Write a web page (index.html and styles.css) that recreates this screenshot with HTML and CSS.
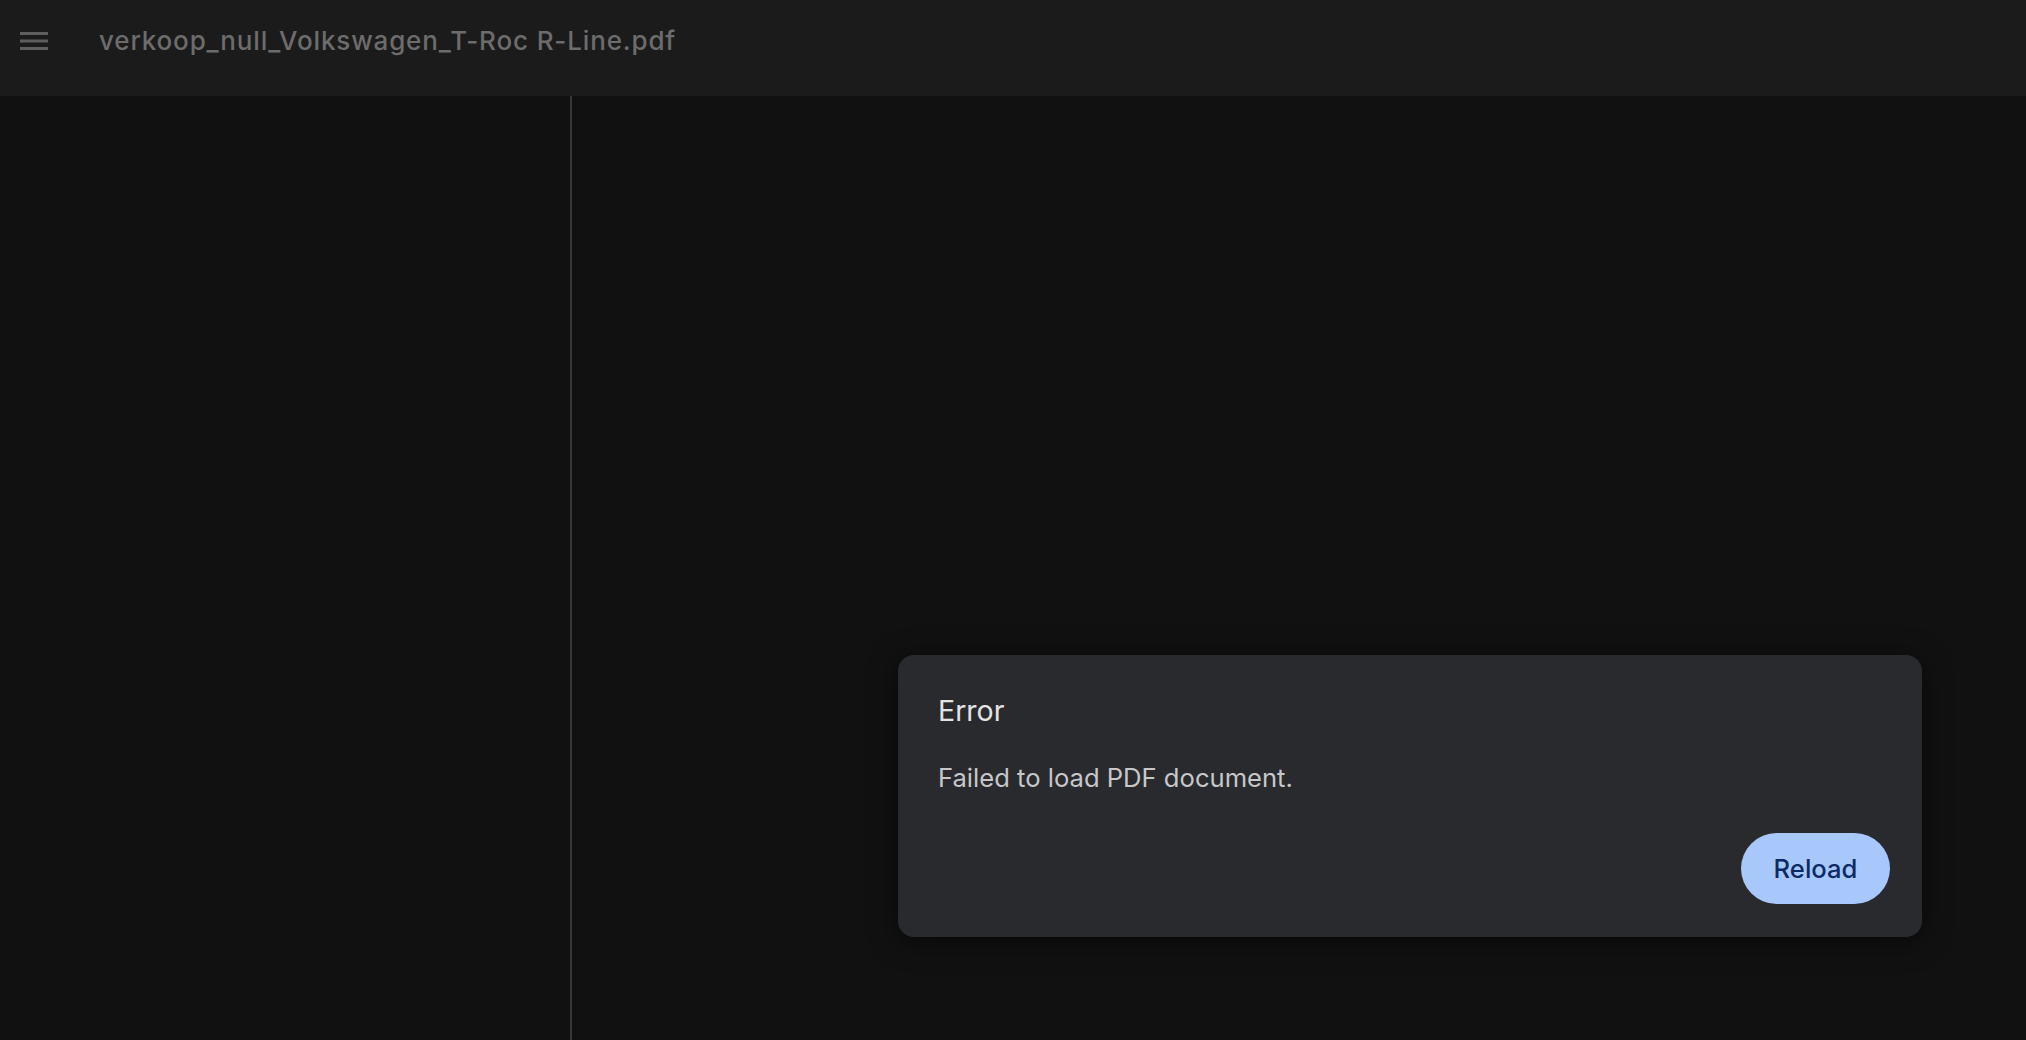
FILE: index.html
```html
<!DOCTYPE html>
<html lang="nl">
<head>
<meta charset="utf-8">
<title>verkoop_null_Volkswagen_T-Roc R-Line.pdf</title>
<link rel="stylesheet" href="styles.css">
</head>
<body>
<div class="app">
  <header class="toolbar">
    <div class="toolbar-row">
      <button class="menu-btn" aria-label="Menu">
        <svg width="28" height="18" viewBox="0 0 28 18" aria-hidden="true">
          <rect x="0" y="0" width="28" height="3" fill="currentColor"/>
          <rect x="0" y="7.5" width="28" height="3" fill="currentColor"/>
          <rect x="0" y="15" width="28" height="3" fill="currentColor"/>
        </svg>
      </button>
      <span class="doc-title">verkoop_null_Volkswagen_T-Roc R-Line.pdf</span>
    </div>
  </header>
  <div class="content">
    <aside class="sidebar"></aside>
    <main class="viewer">
      <div class="dialog" role="alertdialog">
        <div class="dialog-title">Error</div>
        <div class="dialog-body">Failed to load PDF document.</div>
        <div class="dialog-actions">
          <button class="reload-btn">Reload</button>
        </div>
      </div>
    </main>
  </div>
</div>
</body>
</html>
```

FILE: styles.css
```css
html, body {
  margin: 0;
  padding: 0;
  height: 100%;
  background: #111111;
  font-family: Inter, "Liberation Sans", sans-serif;
}

.app {
  display: flex;
  flex-direction: column;
  height: 1040px;
  overflow: hidden;
}

.toolbar {
  height: 96px;
  flex: 0 0 96px;
  background: #1b1b1b;
  box-sizing: border-box;
  padding-bottom: 15px;
}

.toolbar-row {
  height: 81px;
  display: flex;
  align-items: center;
  padding-left: 20px;
  gap: 51px;
}

.menu-btn {
  background: none;
  border: 0;
  padding: 0;
  margin: 0;
  width: 28px;
  height: 18px;
  display: flex;
  color: #5e5e5e;
  cursor: pointer;
}

.doc-title {
  font-size: 26px;
  line-height: 26px;
  font-weight: 500;
  letter-spacing: 0.85px;
  color: #6c6c6c;
  white-space: nowrap;
}

.content {
  flex: 1;
  display: flex;
  min-height: 0;
}

.sidebar {
  width: 570px;
  flex: 0 0 570px;
  background: #111111;
  border-right: 2px solid #363636;
}

.viewer {
  flex: 1;
  position: relative;
  background: #111111;
}

.dialog {
  position: absolute;
  left: 326px;
  top: 559px;
  width: 1024px;
  height: 282px;
  box-sizing: border-box;
  background: #292a2e;
  border-radius: 16px;
  box-shadow: 0 4px 28px rgba(0, 0, 0, 0.55);
  padding: 38px 32px 33px 40px;
  display: flex;
  flex-direction: column;
}

.dialog-title {
  font-size: 28.5px;
  line-height: 36px;
  color: #e3e3e3;
}

.dialog-body {
  margin-top: 32px;
  font-size: 25.6px;
  line-height: 34px;
  color: #c7c7c7;
}

.dialog-actions {
  margin-top: auto;
  display: flex;
  justify-content: flex-end;
}

.reload-btn {
  width: 149px;
  height: 71px;
  border: 0;
  border-radius: 36px;
  background: #a8c7fa;
  color: #0b2b66;
  font-family: Inter, "Liberation Sans", sans-serif;
  font-size: 25.6px;
  font-weight: 500;
  padding: 0;
  cursor: pointer;
}
```
